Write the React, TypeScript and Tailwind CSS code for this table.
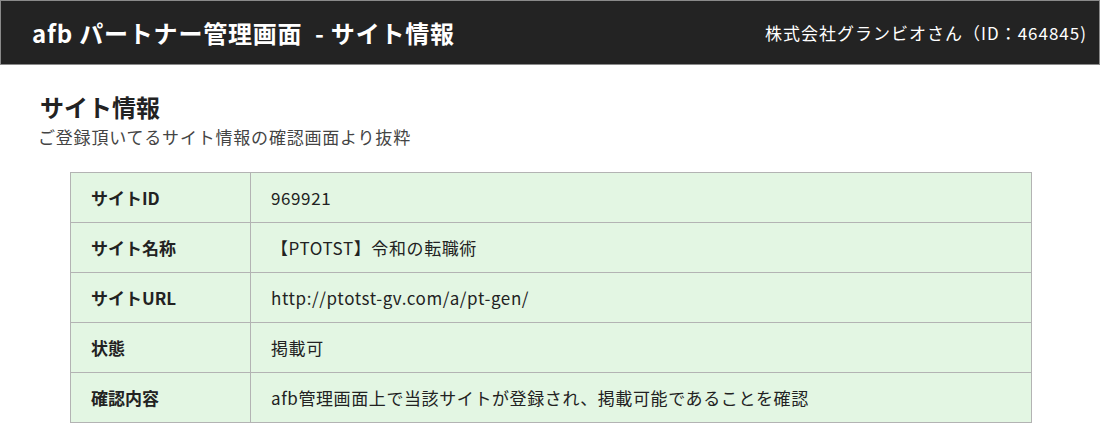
const rows: { label: string; value: string }[] = [
  { label: "サイトID", value: "969921" },
  { label: "サイト名称", value: "【PTOTST】令和の転職術" },
  { label: "サイトURL", value: "http://ptotst-gv.com/a/pt-gen/" },
  { label: "状態", value: "掲載可" },
  { label: "確認内容", value: "afb管理画面上で当該サイトが登録され、掲載可能であることを確認" },
];

export default function App() {
  return (
    <div className="min-h-[440px] bg-white font-['Noto_Sans_CJK_JP',sans-serif]">
      {/* Header */}
      <header className="flex h-[65px] items-center justify-between border border-[#8a8a8a] bg-[#232323] pl-[31px] pr-[12px] text-white">
        <h1 className="text-[24px] font-bold tracking-[0.8px]">afb パートナー管理画面&nbsp; - サイト情報</h1>
        <div className="text-[17px] tracking-[1px]">株式会社グランビオさん（ID：464845)</div>
      </header>

      <main className="px-[40px] pt-[26px]">
        <h2 className="text-[24px] font-bold leading-[32px] text-[#222]">サイト情報</h2>
        <p className="-ml-[2px] text-[17px] leading-[28px] tracking-[0.8px] text-[#444]">ご登録頂いてるサイト情報の確認画面より抜粋</p>

        <table className="mt-[21px] ml-[30px] w-[962px] border-collapse bg-[#e3f6e3] text-[#222]">
          <tbody>
            {rows.map((r) => (
              <tr key={r.label} className="h-[50px]">
                <td className="w-[180px] border border-[#b3b3b3] pl-[20px] text-[17px] font-bold">{r.label}</td>
                <td className="border border-[#b3b3b3] pl-[20px] text-[17px] tracking-[0.6px]">{r.value}</td>
              </tr>
            ))}
          </tbody>
        </table>
      </main>
    </div>
  );
}
